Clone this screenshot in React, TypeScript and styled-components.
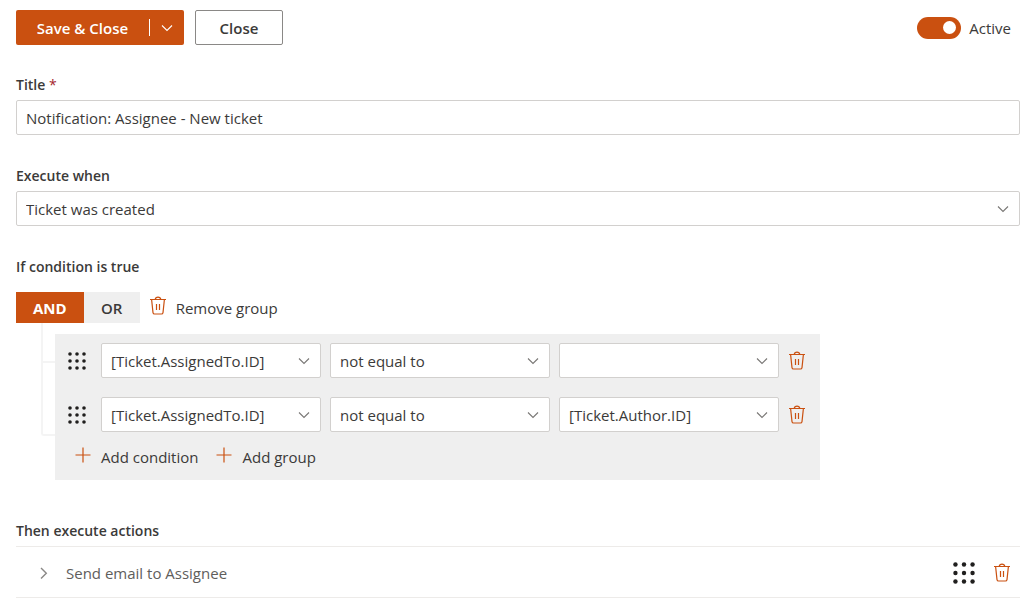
import React, { useState } from "react";
import styled, { createGlobalStyle, css } from "styled-components";

const accent = "#ca5010";

const GlobalStyle = createGlobalStyle`
  *, *::before, *::after { box-sizing: border-box; }
  body {
    margin: 0;
    background: #fff;
    color: #3b3a39;
    font: 15px/20px "Open Sans", "Noto Sans", sans-serif;
  }
  button, input, select { font: inherit; color: inherit; }
  button { cursor: pointer; }
`;

const Page = styled.main`
  padding: 10px 15px 10px 16px;
`;

const Toolbar = styled.header`
  display: flex;
  align-items: center;
  margin-bottom: 29px;
`;

const SplitButton = styled.div`
  display: flex;
  align-items: center;
  height: 35px;
  margin-right: 11px;
  border-radius: 2px;
  background: ${accent};
  color: #fff;
`;

const SplitPart = styled.button<{ $menu?: boolean }>`
  display: flex;
  align-items: center;
  justify-content: center;
  width: ${(p) => (p.$menu ? 35 : 133)}px;
  height: ${(p) => (p.$menu ? 17 : 35)}px;
  padding: 0;
  border: 0;
  background: none;
  font-weight: 600;
  ${(p) => p.$menu && css`border-left: 1px solid #fff;`}
`;

const OutlineButton = styled.button`
  width: 88px;
  height: 35px;
  border: 1px solid #8a8886;
  border-radius: 2px;
  background: #fff;
  font-weight: 600;
`;

const ToggleLabel = styled.label`
  display: flex;
  align-items: center;
  gap: 8px;
  margin-left: auto;
  padding-right: 9px;
`;

const Toggle = styled.input`
  appearance: none;
  display: flex;
  align-items: center;
  width: 44px;
  height: 22px;
  margin: 0;
  padding: 0 5px;
  border-radius: 11px;
  background: #8a8886;
  &::before {
    content: "";
    width: 13px;
    height: 13px;
    border-radius: 50%;
    background: #fff;
  }
  &:checked {
    justify-content: flex-end;
    background: ${accent};
  }
`;

const Section = styled.section<{ $last?: boolean }>`
  margin-bottom: 30px;
  ${(p) => p.$last && css`margin: 40px 0 0;`}
`;

const labelText = css`
  display: block;
  margin: 0 0 4px;
  font-size: 14px;
  font-weight: 600;
  line-height: 22px;
`;

const FieldLabel = styled.label`
  ${labelText}
`;

const Heading = styled.h2`
  ${labelText}
`;

const Required = styled.span`
  color: #a4262c;
  font-weight: 400;
`;

const fieldBox = css`
  width: 100%;
  height: 35px;
  padding: 0 9px;
  border: 1px solid #d2d0ce;
  border-radius: 2px;
  background: #fff;
`;

const TextInput = styled.input`
  ${fieldBox}
`;

const SelectWrap = styled.div`
  display: grid;
  flex: 1;
  align-items: center;
  min-width: 0;
  > * { grid-area: 1 / 1; }
  > svg {
    justify-self: end;
    margin-right: 11px;
    color: #797775;
    pointer-events: none;
  }
`;

const SelectBox = styled.select`
  ${fieldBox}
  appearance: none;
`;

const GroupBar = styled.div`
  display: flex;
  align-items: center;
  margin-top: 14px;
`;

const LogicButton = styled.button<{ $active: boolean }>`
  min-width: 56px;
  height: 31px;
  padding: 0 17px;
  border: 0;
  background: ${(p) => (p.$active ? accent : "#efefef")};
  color: ${(p) => (p.$active ? "#fff" : "inherit")};
  font-weight: ${(p) => (p.$active ? 700 : 600)};
`;

const LinkButton = styled.button`
  display: flex;
  align-items: center;
  gap: 10px;
  padding: 0;
  border: 0;
  background: none;
  > svg { margin-bottom: 4px; }
`;

const RemoveGroup = styled(LinkButton)`
  margin-left: 10px;
`;

const Group = styled.div`
  display: flex;
  padding-left: 25px;
`;

const Branches = styled.div`
  width: 14px;
`;

const Branch = styled.div<{ $height: number }>`
  height: ${(p) => p.$height}px;
  border: solid #f4f4f4;
  border-width: 0 0 2px 2px;
  &:last-child { border-bottom-left-radius: 3px; }
`;

const Panel = styled.div`
  flex: 1;
  max-width: 765px;
  margin-top: 11px;
  padding: 9px 15px 13px 13px;
  background: #efefef;
`;

const ConditionRow = styled.div`
  display: flex;
  align-items: center;
  gap: 9px;
  margin-bottom: 19px;
`;

const IconButton = styled.button`
  display: flex;
  padding: 0;
  border: 0;
  background: none;
`;

const RowHandle = styled(IconButton)`
  margin-right: 6px;
`;

const RowRemove = styled(IconButton)`
  margin-left: 1px;
`;

const AddBar = styled.div`
  display: flex;
  gap: 18px;
  margin-top: -4px;
  padding: 0 7px;
`;

const ActionRow = styled.div`
  display: flex;
  align-items: center;
  height: 52px;
  padding: 2px 10px 0 22px;
  border: solid #edebe9;
  border-width: 1px 0;
  color: #605e5c;
`;

const ActionToggle = styled(LinkButton)`
  gap: 16px;
  margin-right: auto;
  > svg { margin: 0; }
`;

const ActionHandle = styled(IconButton)`
  margin-right: 19px;
`;

const ChevronDown = () => (
  <svg width="12" height="8" viewBox="0 0 12 8" fill="none" stroke="currentColor" strokeWidth="1.1" aria-hidden="true">
    <path d="M1 1.5 6 6.5 11 1.5" />
  </svg>
);

const ChevronRight = () => (
  <svg width="12" height="14" viewBox="0 0 12 14" fill="none" stroke="#8a8886" strokeWidth="1.4" aria-hidden="true">
    <path d="M3 2 8.3 7.3 3 12.6" />
  </svg>
);

const Trash = () => (
  <svg width="16" height="20" viewBox="0 0 16 20" fill="none" stroke={accent} strokeWidth="1.2" aria-hidden="true">
    <path d="M0 3.5H16M5.2 3.3C5.5 1.7 6.4 1.2 8 1.2S10.5 1.7 10.8 3.3M1.6 3.5 3 16.6Q3.2 18 4.6 18H11.4Q12.8 18 13 16.6L14.4 3.5" />
    <path d="M6.5 8V14M9.5 8V14" />
  </svg>
);

const Plus = () => (
  <svg width="16" height="16" viewBox="0 0 16 16" stroke={accent} strokeWidth="1.2" aria-hidden="true">
    <path d="M.5 8H15.5M8 .5V15.5" />
  </svg>
);

const dots = [2, 9, 16];

const Grip = ({ size = 18 }: { size?: number }) => (
  <svg width={size} height={size} viewBox="0 0 18 18" fill="#201f1e" aria-hidden="true">
    {dots.map((y) => dots.map((x) => <circle key={`${x}-${y}`} cx={x} cy={y} r="1.8" />))}
  </svg>
);

type SelectProps = { id?: string; label?: string; options: string[]; value: string };

function Select({ id, label, options, value }: SelectProps) {
  return (
    <SelectWrap>
      <SelectBox id={id} aria-label={label} defaultValue={value}>
        {options.map((o) => (
          <option key={o}>{o}</option>
        ))}
      </SelectBox>
      <ChevronDown />
    </SelectWrap>
  );
}

const conditions = [
  { left: "[Ticket.AssignedTo.ID]", operator: "not equal to", right: "" },
  { left: "[Ticket.AssignedTo.ID]", operator: "not equal to", right: "[Ticket.Author.ID]" },
];

export default function App() {
  const [logic, setLogic] = useState("AND");

  return (
    <>
      <GlobalStyle />
      <Page>
        <Toolbar>
          <SplitButton>
            <SplitPart>Save &amp; Close</SplitPart>
            <SplitPart $menu aria-label="More save options">
              <ChevronDown />
            </SplitPart>
          </SplitButton>
          <OutlineButton>Close</OutlineButton>
          <ToggleLabel>
            <Toggle type="checkbox" role="switch" defaultChecked />
            Active
          </ToggleLabel>
        </Toolbar>

        <Section>
          <FieldLabel htmlFor="title">
            Title <Required>*</Required>
          </FieldLabel>
          <TextInput id="title" defaultValue="Notification: Assignee - New ticket" />
        </Section>

        <Section>
          <FieldLabel htmlFor="event">Execute when</FieldLabel>
          <Select id="event" options={["Ticket was created"]} value="Ticket was created" />
        </Section>

        <Section>
          <Heading>If condition is true</Heading>
          <GroupBar>
            {["AND", "OR"].map((name) => (
              <LogicButton key={name} $active={logic === name} aria-pressed={logic === name} onClick={() => setLogic(name)}>
                {name}
              </LogicButton>
            ))}
            <RemoveGroup>
              <Trash />
              Remove group
            </RemoveGroup>
          </GroupBar>
          <Group>
            <Branches>
              <Branch $height={40} />
              <Branch $height={73} />
            </Branches>
            <Panel>
              {conditions.map((c, i) => (
                <ConditionRow key={i}>
                  <RowHandle aria-label="Move condition">
                    <Grip />
                  </RowHandle>
                  <Select label="Field" options={[c.left]} value={c.left} />
                  <Select label="Operator" options={[c.operator]} value={c.operator} />
                  <Select label="Value" options={[c.right]} value={c.right} />
                  <RowRemove aria-label="Remove condition">
                    <Trash />
                  </RowRemove>
                </ConditionRow>
              ))}
              <AddBar>
                <LinkButton>
                  <Plus />
                  Add condition
                </LinkButton>
                <LinkButton>
                  <Plus />
                  Add group
                </LinkButton>
              </AddBar>
            </Panel>
          </Group>
        </Section>

        <Section $last>
          <Heading>Then execute actions</Heading>
          <ActionRow>
            <ActionToggle aria-expanded={false}>
              <ChevronRight />
              Send email to Assignee
            </ActionToggle>
            <ActionHandle aria-label="Move action">
              <Grip size={22} />
            </ActionHandle>
            <IconButton aria-label="Remove action">
              <Trash />
            </IconButton>
          </ActionRow>
        </Section>
      </Page>
    </>
  );
}
